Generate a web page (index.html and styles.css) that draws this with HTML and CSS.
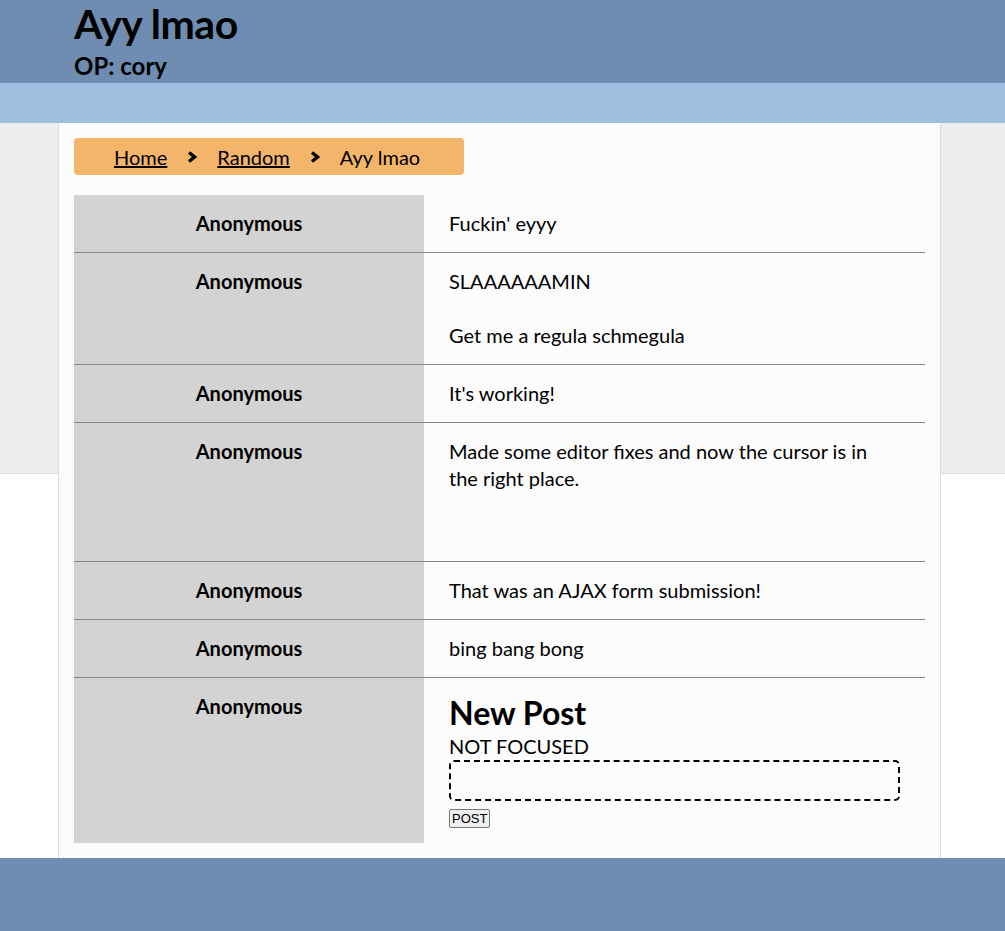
FILE: index.html
```html
<!DOCTYPE html>
<html lang="en">
<head>
    <meta charset="UTF-8">
    <title>Ayy lmao</title>
    <link rel="stylesheet" href="styles.css">
</head>
<body>
    <header class="top">
        <div class="top-inner">
            <h1>Ayy lmao</h1>
            <div class="op">OP: cory</div>
        </div>
    </header>
    <div class="subbar"></div>

    <div class="page">
        <main class="thread">
            <nav class="crumbs">
                <a href="#">Home</a>
                <svg class="chev" viewBox="0 0 10 12"><polyline points="2,1.5 7.5,6 2,10.5"/></svg>
                <a href="#">Random</a>
                <svg class="chev" viewBox="0 0 10 12"><polyline points="2,1.5 7.5,6 2,10.5"/></svg>
                <span>Ayy lmao</span>
            </nav>

            <div class="posts">
                <div class="post">
                    <div class="author">Anonymous</div>
                    <div class="body">Fuckin' eyyy</div>
                </div>
                <div class="post">
                    <div class="author">Anonymous</div>
                    <div class="body">SLAAAAAAMIN

Get me a regula schmegula</div>
                </div>
                <div class="post">
                    <div class="author">Anonymous</div>
                    <div class="body">It's working!</div>
                </div>
                <div class="post">
                    <div class="author">Anonymous</div>
                    <div class="body">Made some editor fixes and now the cursor is in the right place.


</div>
                </div>
                <div class="post">
                    <div class="author">Anonymous</div>
                    <div class="body">That was an AJAX form submission!</div>
                </div>
                <div class="post">
                    <div class="author">Anonymous</div>
                    <div class="body">bing bang bong</div>
                </div>
                <div class="post last">
                    <div class="author">Anonymous</div>
                    <div class="body reply">
                        <h2>New Post</h2>
                        <div class="status">NOT FOCUSED</div>
                        <div class="editor"></div>
                        <button class="post-btn">POST</button>
                    </div>
                </div>
            </div>
        </main>
    </div>

    <footer class="bottom"></footer>
</body>
</html>
```

FILE: styles.css
```css
body {
    margin: 0;
    font-family: 'Lato', sans-serif;
    background: #fff;
    color: #000;
}
.top {
    background: #6e8db0;
    height: 83px;
}
.top-inner {
    margin-left: 74px;
}
.top h1 {
    margin: 0;
    font-size: 41px;
    line-height: 48px;
    font-weight: bold;
    letter-spacing: -0.5px;
}
.op {
    padding-top: 2px;
    font-size: 24px;
    font-weight: bold;
    line-height: 32px;
}
.subbar {
    background: #9ebedf;
    height: 40px;
}
.page {
    background: linear-gradient(#eeeeee 350px, #dddddd 350px, #dddddd 351px, #fff 351px);
}
.thread {
    width: 851px;
    margin-left: 58px;
    padding: 15px;
    background: #fcfcfc;
    border-left: 1px solid #ddd;
    border-right: 1px solid #ddd;
}
.crumbs {
    display: flex;
    align-items: center;
    gap: 20px;
    width: 310px;
    height: 37px;
    padding: 0 40px;
    background: #f3b56a;
    border-radius: 4px;
    font-size: 20px;
}
.crumbs a {
    color: #000;
}
.chev {
    width: 10px;
    height: 12px;
}
.chev polyline {
    fill: none;
    stroke: #000;
    stroke-width: 3.4;
}
.posts {
    margin-top: 20px;
}
.post {
    display: flex;
    border-bottom: 1px solid #888;
    font-size: 20px;
    line-height: 27px;
}
.post.last {
    border-bottom: none;
}
.author {
    width: 320px;
    flex-shrink: 0;
    padding: 15px;
    background: #d3d3d3;
    font-weight: bold;
    text-align: center;
}
.body {
    flex: 1;
    padding: 15px 25px;
    white-space: pre-wrap;
}
.reply {
    white-space: normal;
}
.reply h2 {
    margin: 0;
    font-size: 32px;
    line-height: 40px;
}
.editor {
    height: 37px;
    border: 2px dashed #000;
    border-radius: 5px;
}
.post-btn {
    margin-top: 8px;
    font-family: 'Liberation Sans', sans-serif;
    font-size: 13px;
    padding: 1px 2px;
    border: 1px solid #767676;
    border-radius: 2px;
    background: #efefef;
    line-height: 15px;
    display: block;
}
.bottom {
    background: #6e8db0;
    height: 73px;
}
```
